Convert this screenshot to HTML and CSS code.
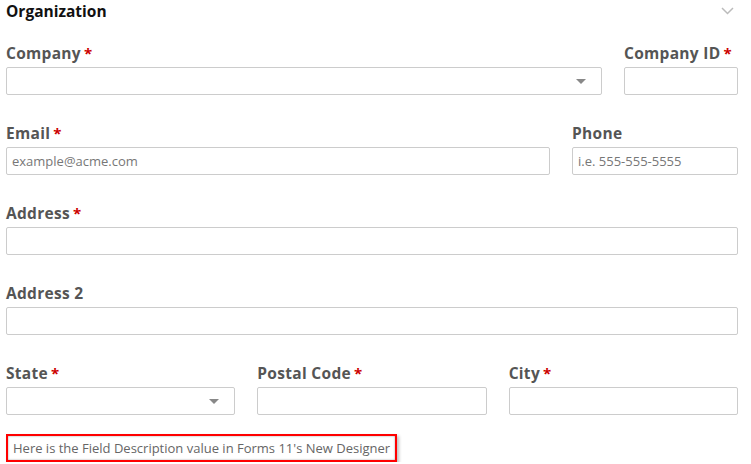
FILE: index.html
```html
<!DOCTYPE html>
<html>
<head>
<meta charset="utf-8">
<link rel="stylesheet" href="styles.css">
</head>
<body>
<div class="form">
  <div class="header">
    <h2 class="title">Organization</h2>
    <svg class="chevron" width="13" height="8" viewBox="0 0 13 8"><path d="M1 1 L6.5 6.5 L12 1" fill="none" stroke="#bbb" stroke-width="1.5"/></svg>
  </div>

  <div class="row row-company">
    <div class="field">
      <label class="label">Company<span class="req">*</span></label>
      <div class="input select"><span class="arrow"></span></div>
    </div>
    <div class="field">
      <label class="label">Company ID<span class="req">*</span></label>
      <div class="input"></div>
    </div>
  </div>

  <div class="row row-email">
    <div class="field">
      <label class="label">Email<span class="req">*</span></label>
      <div class="input"><span class="ph">example@acme.com</span></div>
    </div>
    <div class="field">
      <label class="label">Phone</label>
      <div class="input"><span class="ph">i.e. 555-555-5555</span></div>
    </div>
  </div>

  <div class="row row-single">
    <div class="field">
      <label class="label">Address<span class="req">*</span></label>
      <div class="input"></div>
    </div>
  </div>

  <div class="row row-single">
    <div class="field">
      <label class="label">Address 2</label>
      <div class="input"></div>
    </div>
  </div>

  <div class="row row-three">
    <div class="field">
      <label class="label">State<span class="req">*</span></label>
      <div class="input select"><span class="arrow"></span></div>
    </div>
    <div class="field">
      <label class="label">Postal Code<span class="req">*</span></label>
      <div class="input"></div>
    </div>
    <div class="field">
      <label class="label">City<span class="req">*</span></label>
      <div class="input"></div>
    </div>
  </div>

  <div class="desc">Here is the Field Description value in Forms 11's New Designer</div>
</div>
</body>
</html>
```

FILE: styles.css
```css
html, body {
  margin: 0;
  padding: 0;
  background: #fff;
}
body {
  font-family: "Open Sans", "Liberation Sans", sans-serif;
}
.form {
  width: 732px;
  padding: 0 0 0 6px;
}
.header {
  display: flex;
  justify-content: space-between;
  align-items: flex-start;
  height: 40px;
}
.title {
  margin: 0;
  font-size: 15.5px;
  font-weight: 700;
  color: #111;
  line-height: 22px;
}
.chevron {
  margin-top: 7px;
  margin-right: 4px;
}
.row {
  display: grid;
  column-gap: 22px;
  height: 80px;
}
.row-company { grid-template-columns: 1fr 114px; }
.row-email { grid-template-columns: 1fr 166px; }
.row-single { grid-template-columns: 1fr; }
.row-three { grid-template-columns: 1fr 1fr 1fr; height: auto; margin-bottom: 19px; }
.field {
  display: flex;
  flex-direction: column;
}
.label {
  font-size: 15.5px;
  font-weight: 700;
  color: #555;
  line-height: 20px;
  height: 24px;
  padding-top: 3px;
  letter-spacing: 0.3px;
}
.req {
  color: #c00;
  margin-left: 3px;
  font-size: 15px;
}
.input {
  position: relative;
  box-sizing: border-box;
  height: 28px;
  border: 1px solid #ccc;
  border-radius: 2px;
  display: flex;
  align-items: center;
  padding: 0 5px;
}
.ph {
  font-size: 13px;
  color: #777;
}
.arrow {
  position: absolute;
  right: 15px;
  top: 11px;
  width: 0;
  height: 0;
  border-left: 5px solid transparent;
  border-right: 5px solid transparent;
  border-top: 5px solid #888;
}
.desc {
  display: inline-block;
  border: 2px solid #f00;
  box-shadow: inset 0 0 2px #999, 2px 2px 3px rgba(0,0,0,0.25);
  padding: 3px 5px 3px 5px;
  font-size: 13px;
  color: #666;
  line-height: 18px;
}
```
